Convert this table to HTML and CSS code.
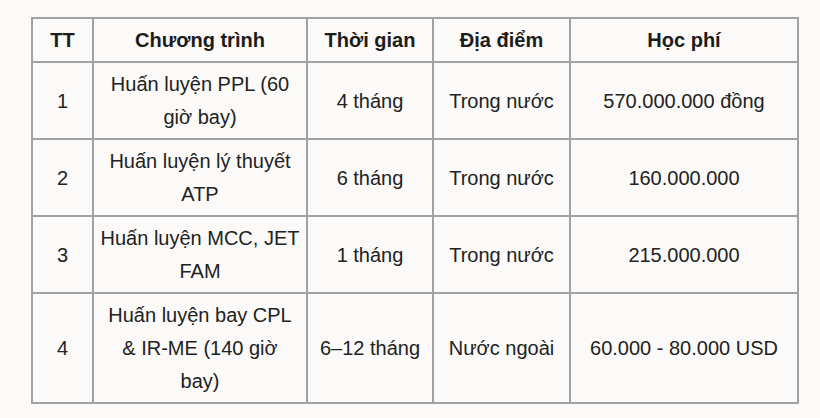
FILE: index.html
```html
<!DOCTYPE html>
<html lang="vi">
<head>
<meta charset="utf-8">
<link rel="stylesheet" href="styles.css">
</head>
<body>
<table class="fees">
  <colgroup>
    <col class="c-tt">
    <col class="c-prog">
    <col class="c-time">
    <col class="c-place">
    <col class="c-fee">
  </colgroup>
  <thead>
    <tr>
      <th>TT</th>
      <th>Chương trình</th>
      <th>Thời gian</th>
      <th>Địa điểm</th>
      <th>Học phí</th>
    </tr>
  </thead>
  <tbody>
    <tr>
      <td>1</td>
      <td>Huấn luyện PPL (60 giờ bay)</td>
      <td>4 tháng</td>
      <td>Trong nước</td>
      <td>570.000.000 đồng</td>
    </tr>
    <tr>
      <td>2</td>
      <td>Huấn luyện lý thuyết ATP</td>
      <td>6 tháng</td>
      <td>Trong nước</td>
      <td>160.000.000</td>
    </tr>
    <tr>
      <td>3</td>
      <td>Huấn luyện MCC, JET FAM</td>
      <td>1 tháng</td>
      <td>Trong nước</td>
      <td>215.000.000</td>
    </tr>
    <tr>
      <td>4</td>
      <td>Huấn luyện bay CPL &amp; IR-ME (140 giờ<br>bay)</td>
      <td>6–12 tháng</td>
      <td>Nước ngoài</td>
      <td>60.000 - 80.000 USD</td>
    </tr>
  </tbody>
</table>
</body>
</html>
```
FILE: styles.css
```css
html, body {
  margin: 0;
  padding: 0;
  background: #fbfaf8;
}

body {
  font-family: "Liberation Sans", Arial, sans-serif;
  color: #222222;
  padding: 17px 0 0 31px;
}

.fees {
  border-collapse: collapse;
  table-layout: fixed;
  width: 766px;
  font-size: 20px;
  line-height: 33px;
}

.c-tt { width: 61px; }
.c-prog { width: 214px; }
.c-time { width: 126px; }
.c-place { width: 137px; }
.c-fee { width: 228px; }

.fees th,
.fees td {
  border: 2px solid #a2a2a2;
  padding: 5px 6px 4px;
  text-align: center;
  vertical-align: middle;
}

.fees th {
  font-weight: bold;
  color: #1c1c1c;
}
```
